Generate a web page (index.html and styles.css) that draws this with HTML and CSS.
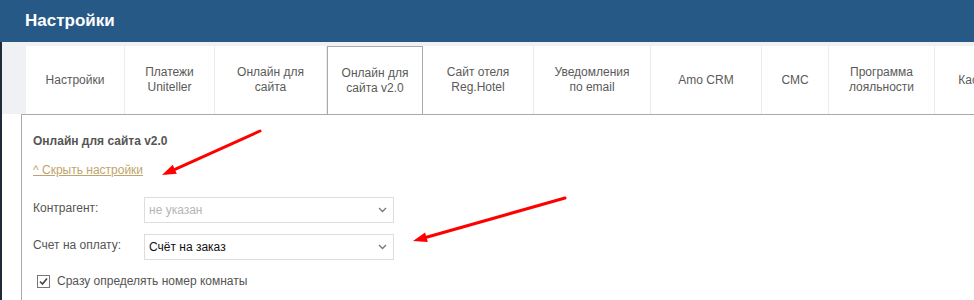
FILE: index.html
```html
<!DOCTYPE html>
<html lang="ru">
<head>
    <meta charset="UTF-8">
    <title>Настройки</title>
    <link rel="stylesheet" href="styles.css">
</head>
<body>
    <header class="top-bar">Настройки</header>

    <div class="page">
        <nav class="tabs">
            <div class="tab">Настройки</div>
            <div class="tab">Платежи<br>Uniteller</div>
            <div class="tab">Онлайн для<br>сайта</div>
            <div class="tab active">Онлайн для<br>сайта v2.0</div>
            <div class="tab">Сайт отеля<br>Reg.Hotel</div>
            <div class="tab">Уведомления<br>по email</div>
            <div class="tab">Amo CRM</div>
            <div class="tab">СМС</div>
            <div class="tab">Программа<br>лояльности</div>
            <div class="tab">Касса</div>
        </nav>

        <section class="panel">
            <h2 class="panel-title">Онлайн для сайта v2.0</h2>
            <a class="toggle-link" href="#">^ Скрыть настройки</a>

            <div class="form-row">
                <label class="form-label">Контрагент:</label>
                <div class="select muted">
                    <span>не указан</span>
                    <svg class="chevron" width="9" height="6" viewBox="0 0 9 6"><polyline points="1,1 4.5,4.5 8,1" fill="none" stroke="#777" stroke-width="1.3"/></svg>
                </div>
            </div>

            <div class="form-row">
                <label class="form-label">Счет на оплату:</label>
                <div class="select">
                    <span>Счёт на заказ</span>
                    <svg class="chevron" width="9" height="6" viewBox="0 0 9 6"><polyline points="1,1 4.5,4.5 8,1" fill="none" stroke="#777" stroke-width="1.3"/></svg>
                </div>
            </div>

            <div class="check-row">
                <span class="checkbox">
                    <svg width="11" height="11" viewBox="0 0 11 11"><polyline points="2,5.5 4.5,8 9,2.5" fill="none" stroke="#444" stroke-width="1.6"/></svg>
                </span>
                <span>Сразу определять номер комнаты</span>
            </div>
        </section>
    </div>

    <!-- red annotation arrows over the screenshot -->
    <svg class="arrows" width="974" height="300" viewBox="0 0 974 300">
        <line x1="260" y1="131" x2="175" y2="169.3" stroke="#f00" stroke-width="3" stroke-linecap="round"/>
        <polygon points="162,175 176.8,173.8 172.7,164.7" fill="#f00"/>
        <line x1="565" y1="198" x2="426.5" y2="237.2" stroke="#f00" stroke-width="3" stroke-linecap="round"/>
        <polygon points="413,241 427.8,242 425.1,232.4" fill="#f00"/>
    </svg>
</body>
</html>
```

FILE: styles.css
```css
/* General */
body {
    margin: 0;
    font-family: "Liberation Sans", Arial, sans-serif;
    background: #fff;
    color: #555;
    overflow: hidden;
    height: 300px;
}

.top-bar {
    height: 42px;
    line-height: 42px;
    padding-left: 25px;
    background: #275987;
    color: #fff;
    font-size: 17px;
    font-weight: bold;
}

.page {
    border-left: 2px solid #1f2b3b;
    height: 258px;
    overflow: hidden;
}

/* Tabs */
.tabs {
    display: flex;
    padding: 4px 0 0 24px;
    background: #eff1f5;
    white-space: nowrap;
    overflow: hidden;
}

.tab {
    flex-shrink: 0;
    box-sizing: border-box;
    height: 68px;
    display: flex;
    align-items: center;
    justify-content: center;
    text-align: center;
    font-size: 12px;
    line-height: 15px;
    color: #5a5a5a;
    background: #fff;
    border-right: 1px solid #ececec;
}

.tab:nth-child(1) { width: 99px; }
.tab:nth-child(2) { width: 90px; }
.tab:nth-child(3) { width: 112px; }
.tab:nth-child(4) { width: 96px; }
.tab:nth-child(5) { width: 111px; }
.tab:nth-child(6) { width: 117px; }
.tab:nth-child(7) { width: 111px; }
.tab:nth-child(8) { width: 67px; }
.tab:nth-child(9) { width: 106px; }
.tab:nth-child(10) { width: 80px; }

.tab.active {
    position: relative;
    height: 69px;
    margin-bottom: -1px;
    border: 1px solid #aaa;
    border-bottom: none;
}

/* Panel */
.panel {
    margin-left: 19px;
    border-top: 1px solid #aaa;
    border-left: 1px solid #aaa;
    padding: 19px 0 0 11px;
    height: 180px;
}

.panel-title {
    margin: 0;
    font-size: 12px;
    line-height: 14px;
    font-weight: bold;
    color: #555;
}

.toggle-link {
    display: inline-block;
    margin-top: 15px;
    font-size: 12px;
    line-height: 14px;
    color: #bfa46c;
    text-decoration: underline;
}

.form-row {
    display: flex;
    margin-top: 19px;
    font-size: 12px;
}

.form-row + .form-row {
    margin-top: 11px;
}

.form-label {
    width: 111px;
    padding-top: 4px;
    line-height: 14px;
}

.select {
    box-sizing: border-box;
    width: 250px;
    height: 26px;
    border: 1px solid #ddd;
    display: flex;
    align-items: center;
    justify-content: space-between;
    padding: 0 6px 0 4px;
    color: #111;
    font-size: 12px;
}

.select.muted {
    color: #b5b5b5;
}

.check-row {
    display: flex;
    align-items: center;
    gap: 7px;
    margin: 14px 0 0 4px;
    font-size: 12px;
}

.checkbox {
    box-sizing: border-box;
    width: 13px;
    height: 13px;
    border: 1px solid #777;
    display: flex;
    align-items: center;
    justify-content: center;
}

.arrows {
    position: absolute;
    top: 0;
    left: 0;
    pointer-events: none;
}
```
